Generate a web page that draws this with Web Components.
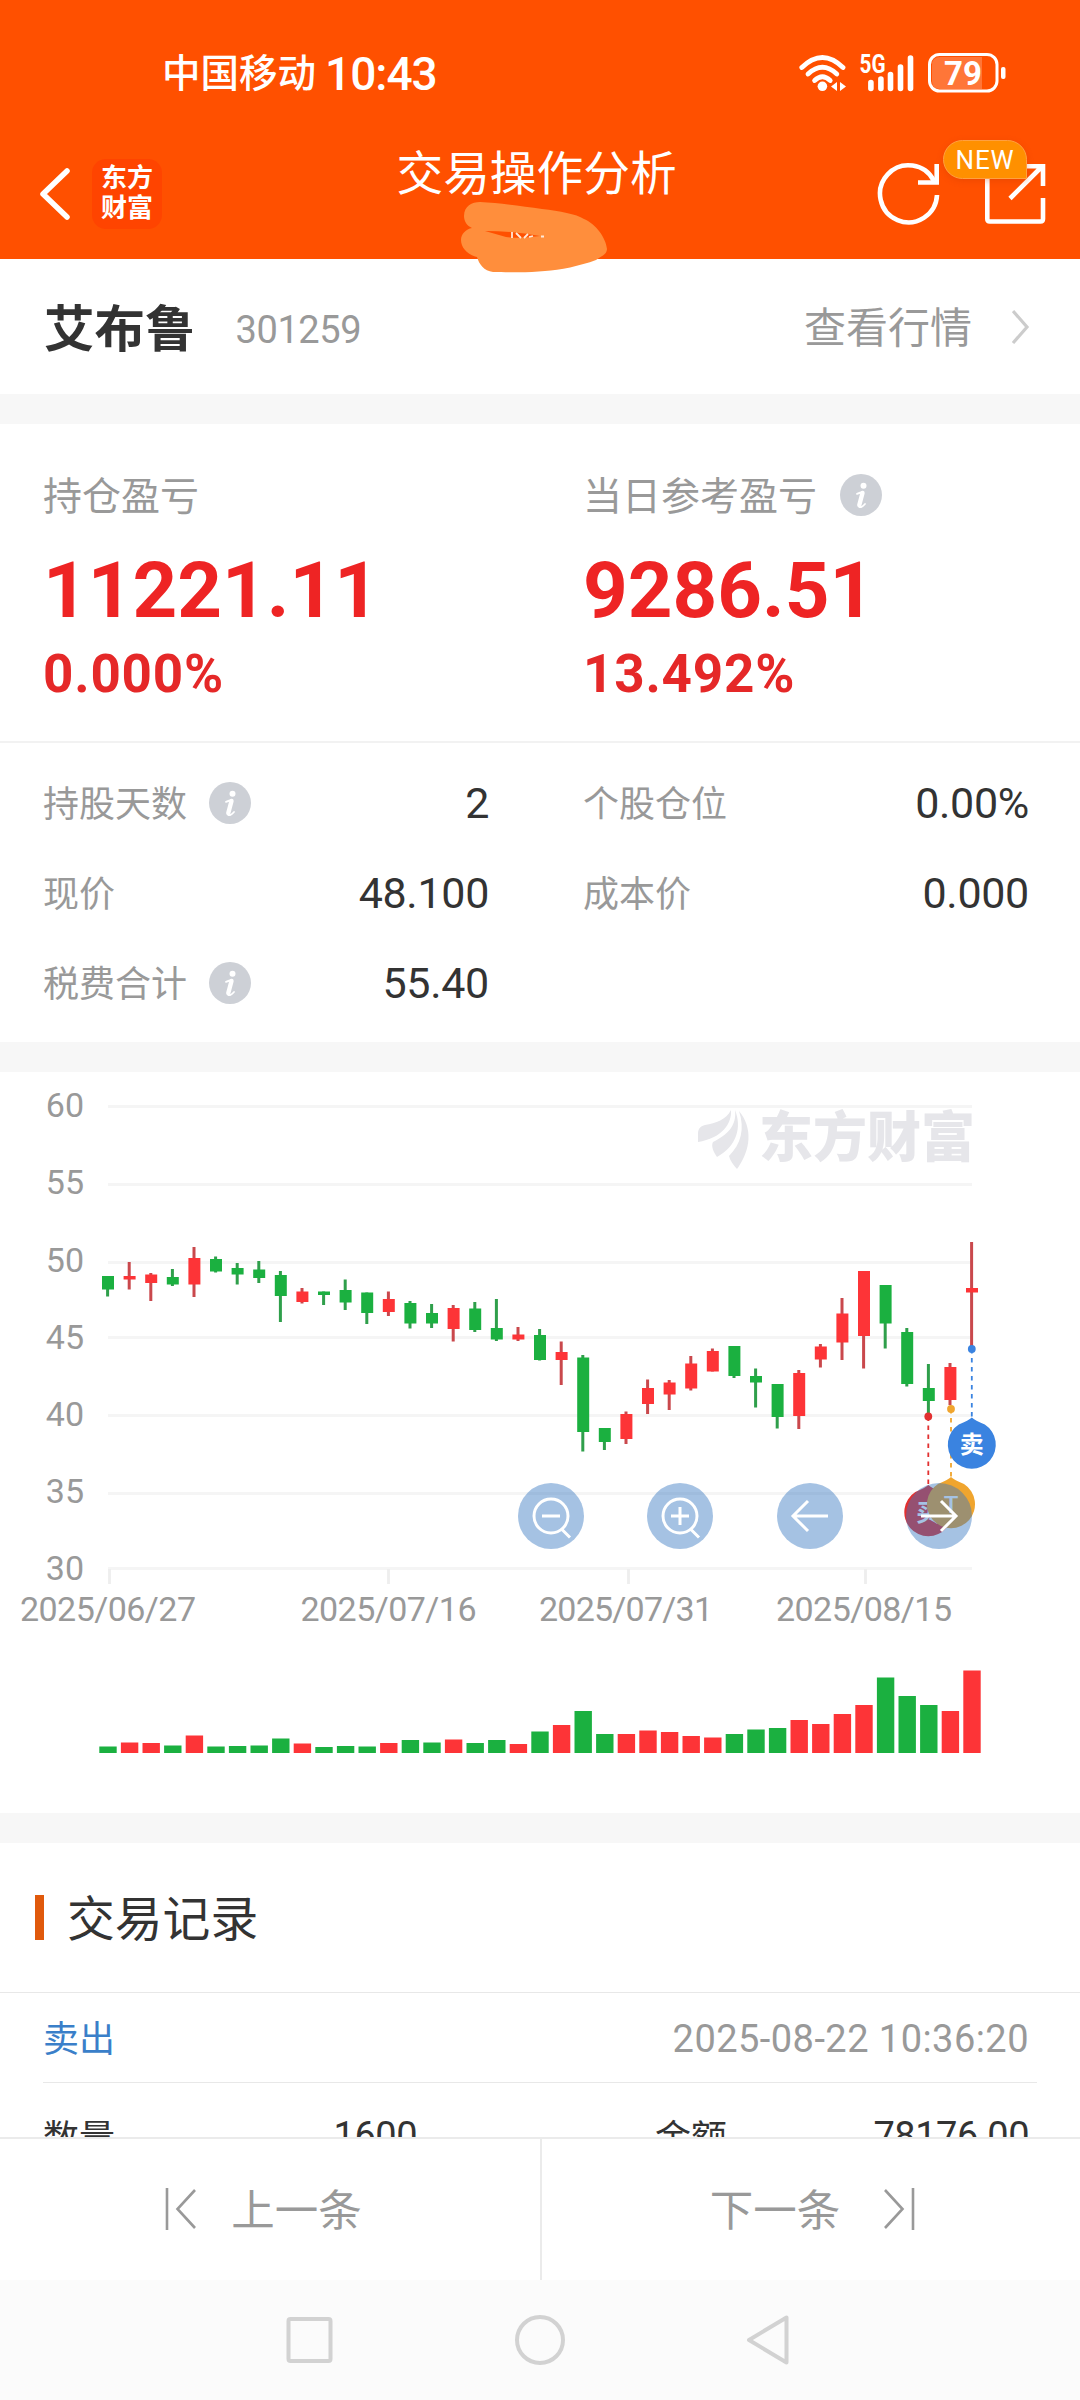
<!DOCTYPE html>
<html lang="zh-CN">
<head>
<meta charset="utf-8">
<title>交易操作分析</title>
<style>
    body {
        margin: 0;
        width: 1080px;
        height: 2400px;
        overflow: hidden;
        background: #fff;
        color: #333;
        font-family: Roboto, "Noto Sans CJK SC", sans-serif;
    }

    trade-app {
        height: 2400px;
    }
</style>
</head>
<body>
<trade-app>
    <status-bar slot="top" carrier="中国移动" time="10:43" battery="79"></status-bar>
    <app-header slot="top">交易操作分析</app-header>

    <stock-row name="艾布鲁" code="301259">查看行情</stock-row>
    <section-gap></section-gap>
    <profit-card>
        <profit-item value="11221.11" rate="0.000%">持仓盈亏</profit-item>
        <profit-item value="9286.51" rate="13.492%" info>当日参考盈亏</profit-item>
    </profit-card>
    <detail-grid>
        <detail-item value="2" info>持股天数</detail-item>
        <detail-item value="0.00%">个股仓位</detail-item>
        <detail-item value="48.100">现价</detail-item>
        <detail-item value="0.000">成本价</detail-item>
        <detail-item value="55.40" info>税费合计</detail-item>
    </detail-grid>
    <section-gap></section-gap>
    <kline-chart></kline-chart>
    <section-gap></section-gap>
    <trade-records title-text="交易记录">
        <trade-record side="卖出" time="2025-08-22 10:36:20" count="1600" amount="78176.00"></trade-record>
    </trade-records>

    <pager-bar slot="bottom"></pager-bar>
    <nav-bar slot="bottom"></nav-bar>
</trade-app>

<script>
class BaseElement extends HTMLElement {

    constructor() {
        super();
        this.shadowDOM = this.attachShadow({mode: "open"});
    }

    connectedCallback() {
        this.render();
    }

    attr(name) {
        return this.getAttribute(name) || "";
    }
}

class TradeApp extends BaseElement {
    render() {
        this.shadowDOM.innerHTML = `
            <style>
                :host {
                    display: flex;
                    flex-direction: column;
                }

                main {
                    flex: 1;
                    min-height: 0;
                    overflow: hidden;
                }
            </style>
            <slot name="top"></slot>
            <main><slot></slot></main>
            <slot name="bottom"></slot>`;
    }
}

class StatusBar extends BaseElement {
    render() {
        this.shadowDOM.innerHTML = `
            <style>
                :host {
                    display: flex;
                    flex: none;
                    align-items: center;
                    justify-content: space-between;
                    height: 146px;
                    padding: 0 74px 0 162px;
                    box-sizing: border-box;
                    background: #ff5000;
                    color: #fff;
                }

                .left {
                    display: flex;
                    align-items: center;
                    font-weight: 500;
                    line-height: 60px;
                }

                .carrier {
                    margin-top: 2px;
                    font-size: 38.5px;
                }

                .time {
                    margin: 2px 0 0 9px;
                    font-size: 46px;
                    letter-spacing: -1px;
                }
            </style>
            <div class="left">
                <span class="carrier">${this.attr("carrier")}</span>
                <span class="time">${this.attr("time")}</span>
            </div>
            <svg width="208" height="44" viewBox="798 51 208 44" fill="none" stroke="#fff" stroke-linecap="round">
                <g stroke-width="4.8">
                    <path d="M801.8 67.5Q822.4 47.5 843 67.5"/>
                    <path d="M808 74Q822.4 60.5 836.8 74"/>
                    <path d="M814.6 80.5Q822.4 73 830.2 80.5"/>
                </g>
                <circle cx="822.4" cy="86.3" r="4.8" fill="#fff" stroke="none"/>
                <path d="M837 82v9l-6-4.500zM840 82v9l6-4.500z" fill="#fff" stroke="none"/>
                <text x="859.500" y="73" font-size="25" font-weight="700" textLength="26" lengthAdjust="spacingAndGlyphs" fill="#fff" stroke="none">5G</text>
                <path stroke-width="5.600" d="M870.9 82.500V88.500M880.9 79V88.500M890.500 74.500V88.500M900.500 67V88.500M910.500 58V88.500"/>
                <rect x="929.500" y="54.500" width="67.500" height="36.500" rx="10" stroke-width="3"/>
                <path d="M982 57H940Q932 57 932 65V81Q932 89 940 89H982Z" fill="#fff" fill-opacity=".22" stroke="none"/>
                <rect x="1001" y="67" width="4.500" height="12" rx="2" fill="#fff" stroke="none"/>
                <text x="963" y="84.500" font-size="33" font-weight="700" text-anchor="middle" fill="#fff" stroke="none">${this.attr("battery")}</text>
            </svg>`;
    }
}

class AppHeader extends BaseElement {
    render() {
        this.shadowDOM.innerHTML = `
            <style>
                :host {
                    display: flex;
                    flex: none;
                    position: relative;
                    z-index: 1;
                    align-items: center;
                    height: 113px;
                    padding: 0 32px 17px 38px;
                    box-sizing: border-box;
                    background: #ff5000;
                    color: #fff;
                }

                .side {
                    display: flex;
                    flex: 1;
                    align-items: center;
                }

                .right {
                    justify-content: flex-end;
                    gap: 43px;
                }

                svg {
                    display: block;
                }

                .brand {
                    width: 70px;
                    height: 70px;
                    margin-left: 19px;
                    padding-top: 4px;
                    box-sizing: border-box;
                    border-radius: 14px;
                    background: #ff4400;
                    font-size: 26px;
                    font-weight: 700;
                    line-height: 30px;
                    text-align: center;
                }

                h1 {
                    margin: 0 13px 41px 0;
                    font-size: 46.700px;
                    font-weight: 400;
                    line-height: 60px;
                }

                .share {
                    position: relative;
                }

                .badge {
                    position: absolute;
                    right: 21px;
                    top: -22px;
                    width: 82px;
                    height: 37px;
                    border: 1px solid #ffa040;
                    border-radius: 20px 20px 0 20px;
                    background: #ff9000;
                    box-shadow: 0 2px 6px rgba(200, 60, 0, .3);
                    font-size: 26px;
                    line-height: 38px;
                    letter-spacing: .8px;
                    text-align: center;
                }

                .smear {
                    position: absolute;
                    left: 458px;
                    top: 54px;
                }
            </style>
            <div class="side">
                <svg width="35" height="56" viewBox="38 166 35 56" fill="none" stroke="#fff" stroke-width="5.500" stroke-linecap="round" stroke-linejoin="round">
                    <path d="M67 171L43 194L67 217"/>
                </svg>
                <div class="brand">东方<br>财富</div>
            </div>
            <h1><slot></slot></h1>
            <div class="side right">
                <svg width="64" height="64" viewBox="877 161 64 64" fill="none" stroke="#fff" stroke-width="4.600">
                    <path d="M937 194A28.500 28.500 0 1 1 934 180"/>
                    <path d="M936.700 163V181.500H918"/>
                </svg>
                <div class="share">
                    <svg width="64" height="64" viewBox="984 161 64 64" fill="none" stroke="#fff" stroke-width="4.600">
                        <path d="M987.300 176V218Q987.300 220.500 989.800 220.500H1040.500Q1043 220.500 1043 218V197"/>
                        <path d="M1010 197.500L1042 165.500M1024 165.300H1043V185"/>
                    </svg>
                    <span class="badge">NEW</span>
                </div>
            </div>
            <svg class="smear" width="152" height="76" viewBox="458 200 152 76">
                <path fill="#ff8e3c" d="M464 216C464 206 472 202 480 202C500 203 522 206 542 209C560 211 576 214 584 219C596 224 606 238 607 249C607 254 602 256 596 260C580 266 560 270 545 271C528 273 508 272 493 272C484 271 479 264 477 257C468 255 461 248 461 240C461 234 466 229 472 228C467 226 464 221 464 216Z"/>
                <path fill="#ff5000" d="M485 231Q515 231 540 236Q520 239 506 237Z"/>
                <path stroke="#ffe9d8" stroke-width="1.800" fill="none" d="M512 232V238M516 233L521 238M524 238L528 234M529 237L533 236M541 236.500H544"/>
            </svg>`;
    }
}

class StockRow extends BaseElement {
    render() {
        this.shadowDOM.innerHTML = `
            <style>
                :host {
                    display: flex;
                    align-items: center;
                    height: 135px;
                    padding: 0 50px 0 44px;
                    color: #999;
                    line-height: 60px;
                }

                .name {
                    margin-top: 6px;
                    color: #333;
                    font-size: 50.500px;
                    font-weight: 700;
                }

                .code {
                    flex: 1;
                    margin: 6px 0 0 40px;
                    font-size: 38px;
                    letter-spacing: -.4px;
                }

                .link {
                    margin-top: 5px;
                    font-size: 42px;
                }

                svg {
                    margin-left: 40px;
                }
            </style>
            <span class="name">${this.attr("name")}</span>
            <span class="code">${this.attr("code")}</span>
            <span class="link"><slot></slot></span>
            <svg width="18" height="36" viewBox="0 0 18 36" fill="none" stroke="#ccc" stroke-width="3.200">
                <path d="M1 2L15 18L1 34"/>
            </svg>`;
    }
}

class SectionGap extends BaseElement {
    render() {
        this.shadowDOM.innerHTML = `
            <style>
                :host {
                    display: block;
                    height: 30px;
                    background: #f7f7f7;
                }
            </style>`;
    }
}

class InfoDot extends BaseElement {
    render() {
        this.shadowDOM.innerHTML = `
            <style>
                :host {
                    display: inline-block;
                    flex: none;
                    width: 42px;
                    height: 42px;
                    border-radius: 50%;
                    background: #cdd0d6;
                }

                svg {
                    display: block;
                }
            </style>
            <svg width="42" height="42" viewBox="0 0 42 42" fill="none" stroke="#fff" stroke-linecap="round" stroke-linejoin="round">
                <circle cx="23.500" cy="11.800" r="3" fill="#fff" stroke="none"/>
                <path d="M22.500 19L19.300 31" stroke-width="4.400"/>
                <path d="M17 19.800Q20 18.500 23 18M19 32.500Q21 34.500 25 30" stroke-width="1.800"/>
            </svg>`;
    }
}

class ProfitCard extends BaseElement {
    render() {
        this.shadowDOM.innerHTML = `
            <style>
                :host {
                    display: grid;
                    grid-template-columns: 1fr 1fr;
                    height: 317px;
                    padding-top: 42px;
                    box-sizing: border-box;
                }
            </style>
            <slot></slot>`;
    }
}

class ProfitItem extends BaseElement {
    render() {
        this.shadowDOM.innerHTML = `
            <style>
                :host {
                    display: block;
                    padding-left: 43px;
                }

                .label {
                    display: flex;
                    align-items: center;
                    gap: 23px;
                    height: 58px;
                    color: #999;
                    font-size: 39px;
                }

                .label span {
                    margin-bottom: 4px;
                }

                .value {
                    color: #ee2424;
                    font-size: 78px;
                    font-weight: 700;
                    line-height: 133px;
                }

                .rate {
                    color: #e52828;
                    font-size: 53px;
                    font-weight: 700;
                    line-height: 35px;
                    letter-spacing: .8px;
                }
            </style>
            <div class="label"><span><slot></slot></span>${this.hasAttribute("info") ? "<info-dot></info-dot>" : ""}</div>
            <div class="value">${this.attr("value")}</div>
            <div class="rate">${this.attr("rate")}</div>`;
    }
}

class DetailGrid extends BaseElement {
    render() {
        this.shadowDOM.innerHTML = `
            <style>
                :host {
                    display: grid;
                    grid-template-columns: 1fr 1fr;
                    grid-auto-rows: 90px;
                    padding: 15px 0 14px;
                    border-top: 2px solid #f2f2f2;
                }
            </style>
            <slot></slot>`;
    }
}

class DetailItem extends BaseElement {
    render() {
        this.shadowDOM.innerHTML = `
            <style>
                :host {
                    display: flex;
                    align-items: center;
                    padding: 0 51px 0 43px;
                    color: #999;
                    font-size: 36px;
                }

                .label {
                    margin-bottom: 4px;
                }

                info-dot {
                    margin-left: 22px;
                }

                .value {
                    margin-left: auto;
                    color: #333;
                    font-size: 43px;
                    letter-spacing: -.3px;
                }
            </style>
            <span class="label"><slot></slot></span>
            ${this.hasAttribute("info") ? "<info-dot></info-dot>" : ""}
            <span class="value">${this.attr("value")}</span>`;
    }
}

const UP = "#fd3437";
const DOWN = "#1bb040";
const FIRST_X = 108;
const STEP = 21.6;
const TOP = 1072;

// direction, body top, body bottom, wick top, wick bottom, volume height
const CANDLES = [
    ["d", 1276, 1289.5, 1276, 1296.5, 6.5],
    ["u", 1276, 1279.5, 1262, 1289.5, 10.5],
    ["u", 1274.5, 1283, 1273, 1301, 10],
    ["d", 1277, 1284.5, 1269, 1286, 7.5],
    ["u", 1258, 1284.5, 1247, 1297, 17.5],
    ["d", 1259, 1271.5, 1256.5, 1272.5, 6.5],
    ["d", 1268, 1274.5, 1263, 1284.5, 7],
    ["d", 1269.5, 1278, 1261, 1283, 7.5],
    ["d", 1275, 1296, 1271, 1322, 14.5],
    ["u", 1291.5, 1302, 1288, 1303.5, 9.5],
    ["d", 1291.5, 1295, 1291.5, 1305, 6],
    ["d", 1290, 1302.5, 1279.5, 1310, 7],
    ["d", 1292.5, 1313, 1292.5, 1324, 6.5],
    ["u", 1299, 1312, 1291.5, 1316, 10],
    ["d", 1303, 1323.5, 1301, 1328.5, 13],
    ["d", 1313, 1323.5, 1304, 1328, 10.5],
    ["u", 1308, 1329, 1305, 1341.5, 13.5],
    ["d", 1308.5, 1330, 1302, 1332, 10],
    ["d", 1328, 1339.5, 1299, 1341, 13],
    ["u", 1334.5, 1339.5, 1327, 1341, 9],
    ["d", 1335, 1360, 1329, 1360.5, 21.5],
    ["u", 1352, 1360, 1341.5, 1385, 28],
    ["d", 1357.5, 1432, 1355, 1451.5, 42],
    ["d", 1428, 1442, 1428, 1450, 19],
    ["u", 1414, 1439, 1411.5, 1444, 19],
    ["u", 1388, 1404, 1379.5, 1414, 22.5],
    ["u", 1382.5, 1394.5, 1380, 1410, 21],
    ["u", 1363.5, 1388.5, 1356, 1390.5, 17],
    ["u", 1351, 1371.5, 1348.5, 1371.5, 15.5],
    ["d", 1346, 1376, 1346, 1378, 19],
    ["d", 1376, 1382.5, 1368.5, 1407.5, 23.5],
    ["d", 1384, 1417, 1384, 1428.5, 25],
    ["u", 1373, 1416, 1370, 1429, 33],
    ["u", 1346.5, 1359.5, 1344, 1367.5, 29],
    ["u", 1313.5, 1342.5, 1298, 1360, 39],
    ["u", 1271, 1336, 1271, 1368.5, 48],
    ["d", 1285, 1323.5, 1285, 1348.5, 75.5],
    ["d", 1332, 1384, 1328, 1386.5, 57],
    ["d", 1388, 1401, 1364, 1417, 48],
    ["u", 1367, 1400, 1363, 1405, 42],
    ["u", 1288, 1292.5, 1242, 1346, 82.5]
];

const GRID = [[60, 1106.5], [55, 1184.5], [50, 1262.5], [45, 1337.5], [40, 1415.5], [35, 1493.5], [30, 1568.5]];
const DATES = [["2025/06/27", 109.5, 108], ["2025/07/16", 388.5, 388.5], ["2025/07/31", 628.5, 626], ["2025/08/15", 865.5, 864]];

const PINS = [
    {x: 928.3, from: 1416.5, tip: 1485, color: "#e23030", text: "买"},
    {x: 951, from: 1409, tip: 1477, color: "#f0a52e", text: "T"},
    {x: 971.8, from: 1349, tip: 1417.5, color: "#3a83e0", text: "卖"}
];

class KlineChart extends BaseElement {

    grid() {
        const lines = GRID.map(([label, y], i) => `
            <path d="M108 ${y}H972" stroke="#f5f5f5" stroke-width="2.800"/>
            <text x="84" y="${1117.3 + 77.1 * i}" text-anchor="end">${label}</text>`).join("");
        const dates = DATES.map(([label, tick, x]) => `
            <path d="M${tick} 1569V1584" stroke="#eee" stroke-width="2.800"/>
            <text x="${x}" y="1621" text-anchor="middle" textLength="${label.endsWith("1") ? 174 : 176}">${label}</text>`).join("");
        return lines + dates;
    }

    candles() {
        return CANDLES.map(([dir, top, bottom, high, low, volume], i) => {
            const x = FIRST_X + STEP * i;
            const color = dir === "u" ? UP : DOWN;
            const wick = dir === "u" ? "#c9484c" : "#2f9f4b";
            return `
                <rect x="${x - 1.9}" y="${high}" width="3" height="${low - high}" fill="${wick}"/>
                <rect x="${x - 6}" y="${top}" width="12" height="${bottom - top}" fill="${color}"/>
                <rect x="${x - 8.7}" y="${1753 - volume}" width="17.400" height="${volume}" fill="${color}"/>`;
        }).join("");
    }

    pins() {
        return PINS.map(({x, from, tip, color, text}) => {
            const cy = tip + 27;
            return `
                <circle cx="${x}" cy="${from}" r="3.900" fill="${color}"/>
                <path d="M${x} ${from}V${tip}" stroke="${color}" stroke-width="1.800" stroke-dasharray="4.500 4.500"/>
                <path d="M${x} ${tip}Q${x + 3} ${tip + 3} ${x + 13} ${cy - 20}A24 24 0 1 1 ${x - 13} ${cy - 20}Q${x - 3} ${tip + 3} ${x} ${tip}Z" fill="${color}"/>
                <text x="${x}" y="${cy + 8.5}" text-anchor="middle" font-size="24" font-weight="${text === "T" ? 500 : 700}" style="fill:#fff">${text}</text>`;
        }).join("");
    }

    render() {
        this.shadowDOM.innerHTML = `
            <style>
                :host {
                    display: block;
                    position: relative;
                    height: 741px;
                }

                svg {
                    display: block;
                }

                text {
                    fill: #999;
                }

                .tools {
                    display: flex;
                    position: absolute;
                    left: 518px;
                    top: 411px;
                    gap: 63.400px;
                }
            </style>
            <svg width="1080" height="741" viewBox="0 ${TOP} 1080 741" font-size="34" fill="none">
                ${this.grid()}
                <g fill="#e6e6ea">
                    <path d="M731 1110C732 1124 722 1138 698 1142V1134C698 1128 701 1126 705 1125C716 1123 726 1120 731 1110Z"/>
                    <path d="M735 1110C742 1127 737 1146 717 1157C713 1151 711 1146 713 1142C727 1135 737 1126 735 1110Z"/>
                    <path d="M739 1111C753 1128 751 1150 737 1169C733 1165 730 1160 729 1156C741 1144 745 1129 739 1111Z"/>
                    <text x="759" y="1157" font-size="54" font-weight="900" textLength="216" lengthAdjust="spacingAndGlyphs" style="fill:#e6e6ea">东方财富</text>
                </g>
                ${this.candles()}
                ${this.pins()}
            </svg>
            <div class="tools">
                <round-button icon="out"></round-button>
                <round-button icon="in"></round-button>
                <round-button icon="left"></round-button>
                <round-button icon="right"></round-button>
            </div>`;
    }
}

const TOOL_ICONS = {
    out: `<circle cx="33" cy="33" r="17"/><path d="M24 33H42M43.500 46L52 54.500"/>`,
    in: `<circle cx="33" cy="33" r="17"/><path d="M24 33H42M33 24V42M43.500 46L52 54.500"/>`,
    left: `<path d="M51 33H16M31 18L16 33L31 48"/>`,
    right: `<path d="M15 33H50M35 18L50 33L35 48"/>`
};

class RoundButton extends BaseElement {
    render() {
        this.shadowDOM.innerHTML = `
            <style>
                :host {
                    display: block;
                    width: 66px;
                    height: 66px;
                    border-radius: 50%;
                    background: rgba(55, 120, 193, .45);
                }

                svg {
                    display: block;
                }
            </style>
            <svg width="66" height="66" viewBox="0 0 66 66" fill="none" stroke="#fff" stroke-width="3">
                ${TOOL_ICONS[this.attr("icon")]}
            </svg>`;
    }
}

class TradeRecords extends BaseElement {
    render() {
        this.shadowDOM.innerHTML = `
            <style>
                :host {
                    display: block;
                }

                h2 {
                    display: flex;
                    align-items: center;
                    gap: 23px;
                    height: 149px;
                    margin: 0;
                    padding-left: 35px;
                    border-bottom: 1px solid #e8e8e8;
                    font-size: 47.800px;
                    font-weight: 400;
                }

                h2::before {
                    content: "";
                    width: 9px;
                    height: 45px;
                    background: #e0590c;
                }

                h2 span {
                    margin-bottom: 5px;
                }
            </style>
            <h2><span>${this.attr("title-text")}</span></h2>
            <slot></slot>`;
    }
}

class TradeRecord extends BaseElement {
    render() {
        this.shadowDOM.innerHTML = `
            <style>
                :host {
                    display: block;
                    padding: 0 43px;
                    font-size: 36px;
                }

                .head, .row {
                    display: flex;
                    align-items: center;
                    justify-content: space-between;
                    height: 89px;
                    padding-right: 8px;
                }

                .head {
                    border-bottom: 1px solid #e8e8e8;
                }

                .side {
                    margin-bottom: 3px;
                    color: #3a7fc9;
                }

                .time {
                    margin-top: 2px;
                    color: #999;
                    font-size: 38px;
                    letter-spacing: .45px;
                }

                .row {
                    height: 103px;
                }

                .pair {
                    display: flex;
                    align-items: center;
                    justify-content: space-between;
                    width: 374px;
                }

                .num {
                    margin-top: 3px;
                    font-size: 38px;
                    letter-spacing: -.5px;
                }
            </style>
            <div class="head">
                <span class="side">${this.attr("side")}</span>
                <span class="time">${this.attr("time")}</span>
            </div>
            <div class="row">
                <div class="pair"><span>数量</span><span class="num">${this.attr("count")}</span></div>
                <div class="pair"><span>金额</span><span class="num">${this.attr("amount")}</span></div>
            </div>`;
    }
}

class PagerBar extends BaseElement {
    render() {
        this.shadowDOM.innerHTML = `
            <style>
                :host {
                    display: grid;
                    grid-template-columns: 1fr 1fr;
                    flex: none;
                    height: 143px;
                    box-sizing: border-box;
                    border-top: 2px solid #ebebeb;
                    background: #fff;
                    color: #999;
                    font-size: 43.500px;
                }

                div {
                    display: flex;
                    align-items: center;
                    justify-content: center;
                    gap: 34px;
                    padding-right: 13px;
                }

                div + div {
                    padding: 0 0 0 3px;
                    gap: 43px;
                    border-left: 2px solid #ebebeb;
                }

                span {
                    margin-bottom: 5px;
                }

                svg {
                    margin-bottom: 2px;
                    fill: none;
                    stroke: #999;
                    stroke-width: 2.600;
                }
            </style>
            <div>
                <svg width="32" height="44" viewBox="0 0 32 44"><path d="M2 1V43M30 3L12.500 22L30 41"/></svg>
                <span>上一条</span>
            </div>
            <div>
                <span>下一条</span>
                <svg width="32" height="44" viewBox="0 0 32 44"><path d="M30 1V43M2 3L19.500 22L2 41"/></svg>
            </div>`;
    }
}

class NavBar extends BaseElement {
    render() {
        this.shadowDOM.innerHTML = `
            <style>
                :host {
                    display: flex;
                    flex: none;
                    align-items: center;
                    justify-content: center;
                    gap: 178px;
                    height: 120px;
                    background: #fbfbfb;
                }

                svg {
                    fill: none;
                    stroke: #d2d2d2;
                    stroke-width: 4;
                    stroke-linejoin: round;
                }
            </style>
            <svg width="52" height="52" viewBox="0 0 52 52"><rect x="4.500" y="5" width="42" height="42" rx="2"/></svg>
            <svg width="52" height="52" viewBox="0 0 52 52"><circle cx="26" cy="26" r="23"/></svg>
            <svg width="52" height="52" viewBox="0 0 52 52"><path d="M5 26L42.500 3.500V48.500Z"/></svg>`;
    }
}

customElements.define("trade-app", TradeApp);
customElements.define("status-bar", StatusBar);
customElements.define("app-header", AppHeader);
customElements.define("stock-row", StockRow);
customElements.define("section-gap", SectionGap);
customElements.define("info-dot", InfoDot);
customElements.define("profit-card", ProfitCard);
customElements.define("profit-item", ProfitItem);
customElements.define("detail-grid", DetailGrid);
customElements.define("detail-item", DetailItem);
customElements.define("round-button", RoundButton);
customElements.define("kline-chart", KlineChart);
customElements.define("trade-records", TradeRecords);
customElements.define("trade-record", TradeRecord);
customElements.define("pager-bar", PagerBar);
customElements.define("nav-bar", NavBar);
</script>
</body>
</html>
